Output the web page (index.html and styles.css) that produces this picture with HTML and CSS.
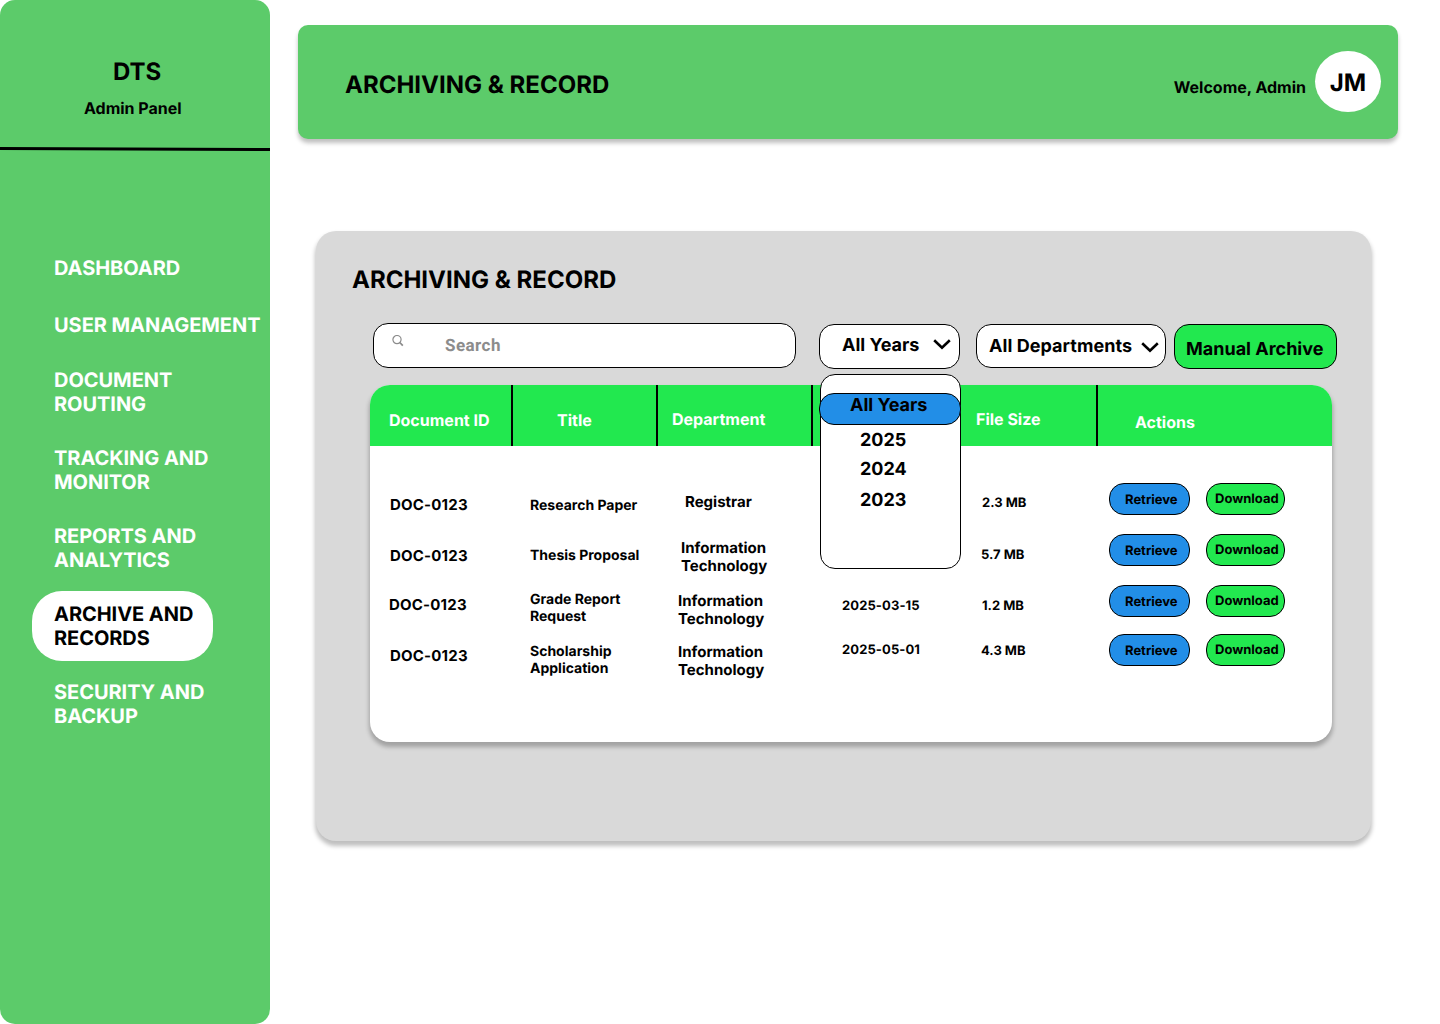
FILE: index.html
```html
<!DOCTYPE html>
<html lang="en">
<head>
<meta charset="utf-8">
<title>DTS Admin Panel</title>
<link rel="stylesheet" href="styles.css">
</head>
<body>
<aside class="sidebar">
  <div class="brand">DTS</div>
  <div class="brand-sub">Admin Panel</div>
  <svg class="rule" width="270" height="4" viewBox="0 0 270 4"><path d="M0 1.5L270 2.5" stroke="#000" stroke-width="3"/></svg>
  <nav class="nav">
    <a class="nav-item">DASHBOARD</a>
    <a class="nav-item">USER MANAGEMENT</a>
    <a class="nav-item">DOCUMENT<br>ROUTING</a>
    <a class="nav-item">TRACKING AND<br>MONITOR</a>
    <a class="nav-item">REPORTS AND<br>ANALYTICS</a>
    <a class="nav-item active">ARCHIVE AND<br>RECORDS</a>
    <a class="nav-item">SECURITY AND<br>BACKUP</a>
  </nav>
</aside>
<main class="main">
  <header class="topbar">
    <h1 class="page-title">ARCHIVING &amp; RECORD</h1>
    <span class="welcome">Welcome, Admin</span>
    <span class="avatar">JM</span>
  </header>
  <section class="panel">
    <h2 class="panel-title">ARCHIVING &amp; RECORD</h2>
    <div class="toolbar">
      <div class="search">
        <svg class="search-icon" width="12" height="12" viewBox="0 0 12 12" fill="none" stroke="#8c8c8c"><circle cx="5" cy="4.6" r="4.1" stroke-width="1.2"/><path d="M7.8 7.5L10.8 10.7" stroke-width="1.7"/></svg>
        <span class="search-text">Search</span>
      </div>
      <div class="select years">
        <span>All Years</span>
        <svg class="chevron" width="18" height="11" viewBox="0 0 18 11" fill="none" stroke="#000" stroke-width="2.6"><path d="M1.2 1.2L9 8.6L16.8 1.2"/></svg>
        <div class="menu">
          <div class="option selected">All Years</div>
          <div class="option">2025</div>
          <div class="option">2024</div>
          <div class="option last">2023</div>
        </div>
      </div>
      <div class="select depts">
        <span>All Departments</span>
        <svg class="chevron" width="18" height="11" viewBox="0 0 18 11" fill="none" stroke="#000" stroke-width="2.6"><path d="M1.2 1.2L9 8.6L16.8 1.2"/></svg>
      </div>
      <div class="archive">Manual Archive</div>
    </div>
    <div class="table">
      <div class="thead">
        <div class="th th-id">Document ID</div>
        <div class="th th-title">Title</div>
        <div class="th th-dept">Department</div>
        <div class="th th-date"></div>
        <div class="th th-size">File Size</div>
        <div class="th th-actions">Actions</div>
      </div>
      <div class="row row-1">
        <div class="id">DOC-0123</div><div class="title">Research Paper</div><div class="dept">Registrar</div><div class="date"></div><div class="size">2.3 MB</div>
        <div class="actions"><span class="btn retrieve">Retrieve</span><span class="btn download">Download</span></div>
      </div>
      <div class="row row-2">
        <div class="id">DOC-0123</div><div class="title">Thesis Proposal</div><div class="dept">Information<br>Technology</div><div class="date"></div><div class="size">5.7 MB</div>
        <div class="actions"><span class="btn retrieve">Retrieve</span><span class="btn download">Download</span></div>
      </div>
      <div class="row row-3">
        <div class="id">DOC-0123</div><div class="title">Grade Report<br>Request</div><div class="dept">Information<br>Technology</div><div class="date">2025-03-15</div><div class="size">1.2 MB</div>
        <div class="actions"><span class="btn retrieve">Retrieve</span><span class="btn download">Download</span></div>
      </div>
      <div class="row row-4">
        <div class="id">DOC-0123</div><div class="title">Scholarship<br>Application</div><div class="dept">Information<br>Technology</div><div class="date">2025-05-01</div><div class="size">4.3 MB</div>
        <div class="actions"><span class="btn retrieve">Retrieve</span><span class="btn download">Download</span></div>
      </div>
    </div>
  </section>
</main>
</body>
</html>
```
FILE: styles.css
```css
* { box-sizing: border-box; }
body {
  margin: 0;
  height: 1024px;
  display: flex;
  background: #fff;
  color: #000;
  font-family: Inter, "Liberation Sans", sans-serif;
  font-weight: 700;
  text-rendering: geometricPrecision;
  white-space: nowrap;
  overflow: hidden;
}
.sidebar {
  width: 270px;
  height: 1024px;
  background: #5ccb6a;
  border-radius: 15px;
  display: flex;
  flex-direction: column;
}
.brand { margin: 57px 0 0 113px; font-size: 24px; line-height: 30px; }
.brand-sub { margin: 11px 0 0 84px; font-size: 16px; line-height: 20px; }
.rule { display: block; margin-top: 29px; }
.nav {
  display: flex;
  flex-direction: column;
  align-items: flex-start;
  margin: 105px 0 0 32px;
}
.nav-item {
  padding-left: 22px;
  margin-bottom: 30px;
  color: #fff;
  font-size: 20px;
  line-height: 24px;
  letter-spacing: -.05px;
}
.nav-item:nth-child(1) { margin-bottom: 33px; }
.nav-item:nth-child(2) { margin-bottom: 31px; }
.nav-item.active {
  width: 181px;
  height: 70px;
  margin: -11px 0 19px;
  padding-top: 11px;
  border-radius: 30px;
  background: #fff;
  color: #000;
}
.main { padding: 25px 0 0 28px; }
.topbar {
  width: 1100px;
  height: 114px;
  display: flex;
  align-items: flex-start;
  padding: 26px 17px 0 47px;
  border-radius: 10px;
  background: #5ccb6a;
  box-shadow: 0 4px 4px rgba(0, 0, 0, .25);
}
.page-title, .panel-title { margin: 0; font-size: 24px; line-height: 30px; font-weight: 700; }
.page-title { margin: 19px auto 0 0; }
.welcome { margin: 26px 9px 0 0; font-size: 16px; line-height: 20px; }
.avatar {
  width: 66px;
  height: 61px;
  border-radius: 50%;
  background: #fff;
  font-size: 24px;
  line-height: 64px;
  text-align: center;
}
.panel {
  width: 1055px;
  height: 610px;
  margin: 92px 0 0 18px;
  padding-top: 34px;
  border-radius: 20px;
  background: #d9d9d9;
  box-shadow: 0 4px 4px 1px rgba(0, 0, 0, .25);
}
.panel-title { margin-left: 36px; }
.toolbar {
  display: flex;
  align-items: flex-start;
  height: 46px;
  margin: 28px 0 0 57px;
  font-size: 18px;
}
.search, .select, .archive {
  display: flex;
  align-items: flex-start;
  border: 1px solid #000;
  border-radius: 15px;
  background: #fff;
}
.search { width: 423px; height: 45px; padding-left: 18px; }
.search-icon { margin-top: 11px; }
.search-text {
  margin: 12px 0 0 41px;
  color: #8c8c8c;
  font-family: Roboto, sans-serif;
  font-size: 17px;
  line-height: 20px;
  letter-spacing: .45px;
}
.select { position: relative; margin-top: 1px; line-height: 22px; }
.years { width: 141px; height: 45px; margin-left: 23px; padding: 10px 0 0 22px; }
.years .chevron { margin: 4px 0 0 14px; }
.depts { width: 190px; height: 44px; margin-left: 16px; padding: 11px 0 0 12px; letter-spacing: .05px; }
.depts .chevron { margin: 6px 0 0 9px; }
.archive {
  width: 163px;
  height: 45px;
  margin: 1px 0 0 8px;
  padding: 14px 0 0 11px;
  background: #22e84f;
  line-height: 22px;
}
.menu {
  position: absolute;
  z-index: 2;
  left: 0;
  top: 49px;
  width: 141px;
  height: 195px;
  padding-top: 18px;
  border: 1px solid #000;
  border-radius: 15px;
  background: #fff;
}
.option { height: 30px; padding-left: 39px; line-height: 30px; }
.option:nth-child(2) { height: 29px; }
.option.last { margin-top: 1px; }
.option.selected {
  width: 142px;
  height: 32px;
  margin: 0 0 1px -2px;
  padding-left: 30px;
  border: 1px solid #000;
  border-radius: 15px;
  background: #228ee7;
  line-height: 24px;
}
.table {
  width: 962px;
  height: 357px;
  margin: 16px 0 0 54px;
  border-radius: 20px;
  background: #fff;
  box-shadow: 0 4px 4px 1px rgba(0, 0, 0, .25);
}
.thead, .row { display: grid; grid-template-columns: 143px 145px 155px 150px 135px 234px; align-items: start; }
.thead {
  height: 61px;
  margin-bottom: 37px;
  border-radius: 20px 20px 0 0;
  background: #22e84f;
  color: #fff;
  font-size: 16px;
  line-height: 20px;
}
.th { height: 61px; padding-top: 25px; border-right: 2px solid #000; }
.th-id { padding-left: 19px; }
.th-title { padding-left: 44px; }
.th-dept { padding: 24px 0 0 14px; }
.th-date { border-right: 0; }
.th-size { padding: 24px 0 0 13px; }
.th-actions { padding: 27px 0 0 37px; border-right: 0; }

.row { height: 51px; }
.id { margin: 13px 0 0 20px; font-size: 15px; line-height: 18px; letter-spacing: .2px; }
.title { margin: 14px 0 0 17px; font-size: 14px; line-height: 17px; }
.dept { margin: 10px 0 0 20px; font-size: 15px; line-height: 18px; }
.date, .size { margin: 13px 0 0 29px; font-size: 13px; line-height: 16px; }
.date { letter-spacing: .1px; }
.size { margin-left: 18px; }
.row-1 .dept { margin-left: 27px; }
.row-1 .size { margin: 12px 0 0 19px; }
.row-2 .title { margin-top: 13px; }
.row-2 .dept { margin: 5px 0 0 23px; }
.row-3 { height: 49px; }
.row-3 .id { margin: 11px 0 0 19px; }
.row-3 .title { margin-top: 6px; }
.row-3 .dept { margin: 7px 0 0 20px; }
.row-3 .size { margin-left: 19px; }
.row-4 .title { margin-top: 9px; }
.row-4 .dept { margin: 9px 0 0 20px; }
.row-4 .date { margin-top: 8px; }
.row-4 .size { margin-top: 9px; }
.actions { display: flex; gap: 16px; margin-left: 11px; }
.btn {
  height: 32px;
  border: 1px solid #000;
  border-radius: 15px;
  font-size: 13px;
}
.retrieve { width: 81px; padding-left: 15px; background: #228ee7; line-height: 32px; }
.download { width: 79px; padding-left: 8px; background: #22e84f; line-height: 30px; }
```
